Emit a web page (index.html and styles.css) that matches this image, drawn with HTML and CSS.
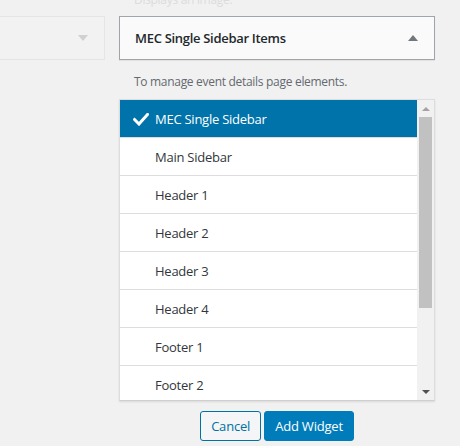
FILE: index.html
```html
<!DOCTYPE html>
<html lang="en">
<head>
    <meta charset="UTF-8">
    <meta name="viewport" content="width=device-width, initial-scale=1.0">
    <title>Widgets</title>
    <link rel="stylesheet" href="styles.css">
</head>
<body>
    <div class="widgets">
        <div class="side-col">
            <div class="widget-top faded">
                <span class="arrow-down"></span>
            </div>
        </div>

        <div class="main-col">
            <p class="prev-desc">Displays an image.</p>

            <div class="widget-top open">
                <h3>MEC Single Sidebar Items</h3>
                <span class="arrow-up"></span>
            </div>

            <p class="widget-desc">To manage event details page elements.</p>

            <div class="chooser">
                <ul class="chooser-list">
                    <li class="selected">
                        <svg class="check" viewBox="0 0 16 13" width="16" height="13">
                            <path d="M1.5 6.5 L6 11 L14.5 1.5" fill="none" stroke="#fff" stroke-width="3" stroke-linecap="square"/>
                        </svg>
                        MEC Single Sidebar
                    </li>
                    <li>Main Sidebar</li>
                    <li>Header 1</li>
                    <li>Header 2</li>
                    <li>Header 3</li>
                    <li>Header 4</li>
                    <li>Footer 1</li>
                    <li>Footer 2</li>
                </ul>
                <div class="scrollbar">
                    <span class="sb-up"></span>
                    <div class="sb-track"><div class="sb-thumb"></div></div>
                    <span class="sb-down"></span>
                </div>
            </div>

            <div class="actions">
                <button class="btn btn-secondary">Cancel</button>
                <button class="btn btn-primary">Add Widget</button>
            </div>
        </div>
    </div>
</body>
</html>
```
FILE: styles.css
```css
/* Page */
body {
    margin: 0;
    background-color: #f1f1f1;
    font-family: "Open Sans", "Noto Sans", sans-serif;
    color: #23282d;
    overflow: hidden;
}

.widgets {
    display: flex;
    gap: 14px;
    height: 446px;
}

/* Left column, the closed sidebar box */
.side-col {
    width: 105px;
    padding-top: 16px;
}

.widget-top.faded {
    height: 42px;
    margin-left: -20px;
    border: 1px solid #e5e5e5;
    background-color: #f2f2f2;
    display: flex;
    align-items: center;
    justify-content: flex-end;
    padding-right: 16px;
}

.arrow-down {
    width: 0;
    height: 0;
    border-left: 5px solid transparent;
    border-right: 5px solid transparent;
    border-top: 6px solid #d0d0d0;
}

/* Right column */
.main-col {
    width: 316px;
}

.prev-desc {
    margin: -8px 0 0 15px;
    height: 24px;
    font-size: 12px;
    line-height: 16px;
    letter-spacing: -0.3px;
    color: #dcdcdc;
}

.widget-top.open {
    height: 42px;
    border: 1px solid #a0a5aa;
    background-color: #fafafa;
    box-shadow: 0 1px 1px rgba(0, 0, 0, 0.06);
    display: flex;
    align-items: center;
    justify-content: space-between;
    padding: 0 16px 0 15px;
}

.widget-top h3 {
    margin: 0;
    font-size: 13px;
    font-weight: 600;
    letter-spacing: -0.3px;
    color: #23282d;
}

.arrow-up {
    width: 0;
    height: 0;
    border-left: 5px solid transparent;
    border-right: 5px solid transparent;
    border-bottom: 6px solid #72777c;
}

.widget-desc {
    margin: 14px 0 0 15px;
    height: 25px;
    font-size: 12px;
    line-height: 16px;
    letter-spacing: -0.3px;
    color: #646970;
}

/* Sidebar chooser list */
.chooser {
    display: flex;
    height: 300px;
    border: 1px solid #dddddd;
    border-bottom-color: #cfcfcf;
    box-shadow: 0 1px 2px rgba(0, 0, 0, 0.1);
    background-color: #fff;
    overflow: hidden;
}

.chooser-list {
    flex: 1;
    margin: 0;
    padding: 0;
    list-style: none;
}

.chooser-list li {
    height: 37px;
    border-bottom: 1px solid #dddddd;
    display: flex;
    align-items: center;
    padding-left: 35px;
    font-size: 13px;
    letter-spacing: -0.25px;
    color: #32373c;
    position: relative;
}

.chooser-list li.selected {
    background-color: #0073aa;
    color: #fff;
}

.check {
    position: absolute;
    left: 13px;
    top: 13px;
}

/* Scrollbar on the right of the list */
.scrollbar {
    width: 17px;
    background-color: #f1f1f1;
    display: flex;
    flex-direction: column;
    align-items: center;
}

.sb-up,
.sb-down {
    height: 17px;
    display: flex;
    align-items: center;
    justify-content: center;
}

.sb-up::before {
    content: "";
    border-left: 4px solid transparent;
    border-right: 4px solid transparent;
    border-bottom: 4px solid #a3a3a3;
}

.sb-down::before {
    content: "";
    border-left: 4px solid transparent;
    border-right: 4px solid transparent;
    border-top: 4px solid #505050;
}

.sb-track {
    flex: 1;
    width: 100%;
}

.sb-thumb {
    margin: 0 auto;
    width: 13px;
    height: 191px;
    background-color: #c1c1c1;
}

/* Buttons */
.actions {
    display: flex;
    justify-content: center;
    gap: 3px;
    margin-top: 10px;
}

.btn {
    height: 30px;
    padding: 0 10px;
    border-radius: 3px;
    font-family: "Open Sans", "Noto Sans", sans-serif;
    font-size: 13px;
    letter-spacing: -0.2px;
    cursor: pointer;
}

.btn-secondary {
    border: 1px solid #0071a1;
    background-color: #f3f5f6;
    color: #0071a1;
}

.btn-primary {
    border: 1px solid #007cba;
    background-color: #007cba;
    color: #fff;
}
```
